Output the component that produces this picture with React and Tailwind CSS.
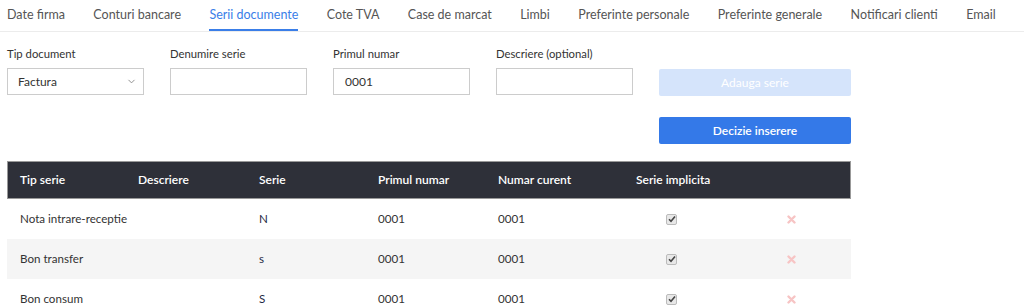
import { ChevronDown } from 'lucide-react';

const tabs = [
  'Date firma',
  'Conturi bancare',
  'Serii documente',
  'Cote TVA',
  'Case de marcat',
  'Limbi',
  'Preferinte personale',
  'Preferinte generale',
  'Notificari clienti',
  'Email',
];

const rows = [
  { tip: 'Nota intrare-receptie', serie: 'N' },
  { tip: 'Bon transfer', serie: 's' },
  { tip: 'Bon consum', serie: 'S' },
];

const cols = 'grid grid-cols-[118px_121px_119px_120px_138px_97px_1fr] whitespace-nowrap';

function Field({ label, children }) {
  return (
    <div className="w-[137px] shrink-0">
      <div className="text-[11.3px] text-[#333] leading-[16px] mb-[6px] whitespace-nowrap">{label}</div>
      {children}
    </div>
  );
}

export default function App() {
  return (
    <div className="w-[1024px] h-[308px] overflow-hidden bg-white font-['Lato','Open_Sans',sans-serif] text-[#333]">
      <div className="flex gap-[28.4px] pl-[7px] border-b border-[#ececec] h-[32px]">
        {tabs.map((t) => (
          <div
            key={t}
            className={
              'shrink-0 whitespace-nowrap text-[12.5px] pt-[6px] leading-[18px] border-b-2 ' +
              (t === 'Serii documente' ? 'text-[#3a7ee8] border-[#3a7ee8]' : 'text-[#555] border-transparent')
            }
          >
            {t}
          </div>
        ))}
      </div>

      <div className="flex gap-[26px] pl-[7px] pt-[14px]">
        <Field label="Tip document">
          <div className="h-[27px] border border-[#ccc] flex items-center justify-between pl-[10px] pr-[6px] text-[12px]">
            Factura
            <ChevronDown size={11} className="text-[#888]" />
          </div>
        </Field>
        <Field label="Denumire serie">
          <div className="h-[27px] border border-[#ccc]" />
        </Field>
        <Field label="Primul numar">
          <div className="h-[27px] border border-[#ccc] flex items-center pl-[11px] text-[12px]">0001</div>
        </Field>
        <Field label="Descriere (optional)">
          <div className="h-[27px] border border-[#ccc]" />
        </Field>
        <div className="flex flex-col gap-[21px] pt-[23px]">
          <div className="w-[192px] h-[27px] rounded-[2px] bg-[#d5e4fb] text-white text-[12px] flex items-center justify-center">
            Adauga serie
          </div>
          <div className="w-[192px] h-[27px] rounded-[2px] bg-[#3479e8] text-white text-[12px] font-semibold flex items-center justify-center">
            Decizie inserere
          </div>
        </div>
      </div>

      <div className="ml-[7px] w-[844px] mt-[17px]">
        <div className={cols + ' h-[38px] items-center bg-[#2e3039] border border-[#999] text-white text-[12px] font-semibold'}>
          <div className="pl-[12px]">Tip serie</div>
          <div className="pl-[12px]">Descriere</div>
          <div className="pl-[12px]">Serie</div>
          <div className="pl-[12px]">Primul numar</div>
          <div className="pl-[12px]">Numar curent</div>
          <div className="pl-[12px]">Serie implicita</div>
          <div />
        </div>
        {rows.map((r, i) => (
          <div
            key={r.tip}
            className={cols + ' h-[40px] items-center text-[11.6px] ' + (i % 2 === 1 ? 'bg-[#f5f5f5]' : 'bg-white')}
          >
            <div className="pl-[13px]">{r.tip}</div>
            <div />
            <div className="pl-[13px] text-[#1f2a44]">{r.serie}</div>
            <div className="pl-[13px]">0001</div>
            <div className="pl-[13px]">0001</div>
            <div className="pl-[43px]">
              <div className="w-[11px] h-[11px] rounded-[2px] border border-[#bbb] bg-[#e8e8e8] flex items-center justify-center">
                <svg width="8" height="8" viewBox="0 0 8 8">
                  <path d="M1 4.2 L3 6.2 L7 1.5" stroke="#444" strokeWidth="1.6" fill="none" />
                </svg>
              </div>
            </div>
            <div className="pl-[67px]">
              <svg width="9" height="9" viewBox="0 0 9 9">
                <path d="M1.5 1.5 L7.5 7.5 M7.5 1.5 L1.5 7.5" stroke="#f7c4c4" strokeWidth="2.4" strokeLinecap="round" />
              </svg>
            </div>
          </div>
        ))}
      </div>
    </div>
  );
}
